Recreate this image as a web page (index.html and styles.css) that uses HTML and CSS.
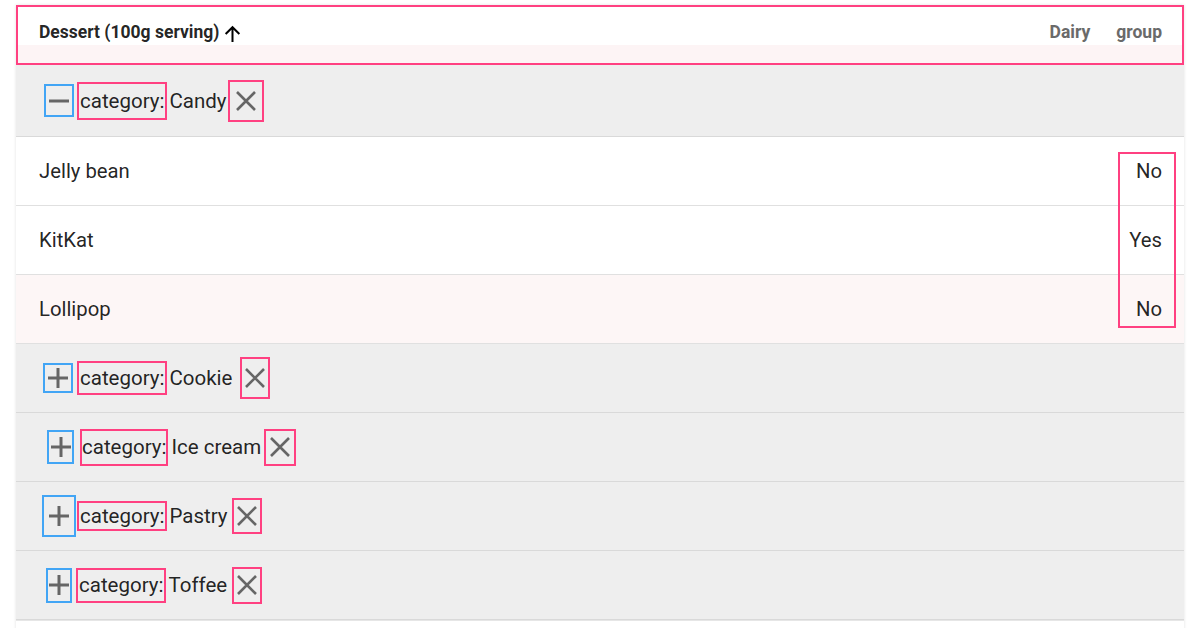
FILE: index.html
```html
<!DOCTYPE html>
<html lang="en">
<head>
  <meta charset="UTF-8" />
  <title>Desserts grouped by category</title>
  <link rel="stylesheet" href="styles.css">
</head>
<body>
  <div class="table">
    <div class="header-row">
      <div class="th th-name">
        Dessert (100g serving)
        <svg class="sort-arrow" width="19" height="19" viewBox="0 0 18 18">
          <path d="M9 17V3M2.5 9.5L9 3l6.5 6.5" fill="none" stroke="#000" stroke-width="1.9"/>
        </svg>
      </div>
      <div class="th th-dairy"><span>Dairy</span><span>group</span></div>
    </div>

    <div class="group-row row-candy">
      <span class="toggle">
        <svg width="22" height="22" viewBox="0 0 22 22"><path d="M1 11h20" stroke="#666" stroke-width="3"/></svg>
      </span>
      <span class="label">category:</span>
      <span class="value">Candy</span>
      <span class="remove">
        <svg width="22" height="22" viewBox="0 0 22 22"><path d="M2 2l18 18M20 2L2 20" stroke="#666" stroke-width="2.6"/></svg>
      </span>
    </div>

    <div class="data-block">
      <div class="data-row"><span>Jelly bean</span><span>No</span></div>
      <div class="data-row"><span>KitKat</span><span>Yes</span></div>
      <div class="data-row hover"><span>Lollipop</span><span>No</span></div>
      <div class="dairy-outline"></div>
    </div>

    <div class="group-row row-cookie">
      <span class="toggle">
        <svg width="22" height="22" viewBox="0 0 22 22"><path d="M1 11h20M11 1v20" stroke="#666" stroke-width="3"/></svg>
      </span>
      <span class="label">category:</span>
      <span class="value">Cookie</span>
      <span class="remove">
        <svg width="22" height="22" viewBox="0 0 22 22"><path d="M2 2l18 18M20 2L2 20" stroke="#666" stroke-width="2.6"/></svg>
      </span>
    </div>

    <div class="group-row row-icecream">
      <span class="toggle">
        <svg width="22" height="22" viewBox="0 0 22 22"><path d="M1 11h20M11 1v20" stroke="#666" stroke-width="3"/></svg>
      </span>
      <span class="label">category:</span>
      <span class="value">Ice cream</span>
      <span class="remove">
        <svg width="22" height="22" viewBox="0 0 22 22"><path d="M2 2l18 18M20 2L2 20" stroke="#666" stroke-width="2.6"/></svg>
      </span>
    </div>

    <div class="group-row row-pastry">
      <span class="toggle">
        <svg width="22" height="22" viewBox="0 0 22 22"><path d="M1 11h20M11 1v20" stroke="#666" stroke-width="3"/></svg>
      </span>
      <span class="label">category:</span>
      <span class="value">Pastry</span>
      <span class="remove">
        <svg width="22" height="22" viewBox="0 0 22 22"><path d="M2 2l18 18M20 2L2 20" stroke="#666" stroke-width="2.6"/></svg>
      </span>
    </div>

    <div class="group-row row-toffee">
      <span class="toggle">
        <svg width="22" height="22" viewBox="0 0 22 22"><path d="M1 11h20M11 1v20" stroke="#666" stroke-width="3"/></svg>
      </span>
      <span class="label">category:</span>
      <span class="value">Toffee</span>
      <span class="remove">
        <svg width="22" height="22" viewBox="0 0 22 22"><path d="M2 2l18 18M20 2L2 20" stroke="#666" stroke-width="2.6"/></svg>
      </span>
    </div>

    <div class="tail-row"></div>
  </div>
</body>
</html>
```

FILE: styles.css
```css
* { box-sizing: border-box; }
body {
  margin: 0;
  padding: 5px 16px 0;
  background: #fff;
  font-family: Roboto, 'Noto Sans', sans-serif;
  color: rgba(0, 0, 0, 0.87);
  overflow: hidden;
}
.table {
  width: 1168px;
  background: #fff;
  box-shadow: 0 0 3px rgba(0, 0, 0, 0.12);
}
.header-row {
  height: 60px;
  display: flex;
  align-items: center;
  justify-content: space-between;
  padding: 0 20px 6px 21px;
  border: 2px solid #ff4081;
  background: linear-gradient(to bottom, #fff 38px, #fdf4f5 38px);
}
.th {
  font-size: 17.5px;
  font-weight: 700;
  display: flex;
  align-items: center;
}
.th-name { color: rgba(0, 0, 0, 0.87); }
.sort-arrow { margin-left: 4px; margin-top: 2px; }
.th-dairy {
  color: #6a6a6a;
  gap: 26px;
}
.group-row {
  height: 69px;
  background: #eee;
  border-bottom: 1px solid #d9d9d9;
  display: flex;
  align-items: center;
  padding-left: 28px;
  font-size: 20.5px;
}
.row-candy { height: 72px; }
.toggle {
  display: inline-flex;
  align-items: center;
  justify-content: center;
  width: 30px;
  height: 33px;
  border: 2px solid #42a5f5;
  margin-right: 3px;
}
.label {
  display: inline-flex;
  align-items: center;
  height: 38px;
  border: 2px solid #ff4081;
  padding: 0 1px 0 1px;
  margin-right: 2px;
}
.value { margin-right: 1px; }
.remove {
  display: inline-flex;
  align-items: center;
  justify-content: center;
  width: 36px;
  height: 42px;
  border: 2px solid #ff4081;
}
.row-cookie .toggle { width: 30px; height: 30px; margin-left: -1px; margin-right: 4px; }
.row-cookie .label { height: 34px; }
.row-cookie .remove { width: 30px; margin-left: 7px; }
.row-icecream .toggle { width: 27px; height: 34px; margin-left: 3px; margin-right: 6px; }
.row-icecream .label { height: 37px; padding: 0; margin-right: 3px; }
.row-icecream .remove { width: 32px; height: 37px; margin-left: 2px; }
.row-pastry .toggle { width: 34px; height: 42px; margin-left: -2px; margin-right: 1px; }
.row-pastry .label { height: 30px; }
.row-pastry .remove { width: 30px; height: 36px; margin-left: 3px; }
.row-toffee .toggle { width: 26px; height: 35px; margin-left: 2px; margin-right: 4px; }
.row-toffee .label { height: 35px; }
.row-toffee .remove { width: 30px; height: 37px; margin-left: 4px; }
.data-block { position: relative; }
.data-row {
  height: 69px;
  display: flex;
  align-items: center;
  justify-content: space-between;
  padding: 0 22px 0 23px;
  border-bottom: 1px solid #e0e0e0;
  font-size: 20.3px;
}
.data-row.hover { background: #fdf6f6; }
.dairy-outline {
  position: absolute;
  top: 15px;
  left: 1102px;
  width: 58px;
  height: 176px;
  border: 2px solid #ff4081;
}
.tail-row {
  height: 20px;
  border-top: 1px solid #e6e6e6;
}
```
